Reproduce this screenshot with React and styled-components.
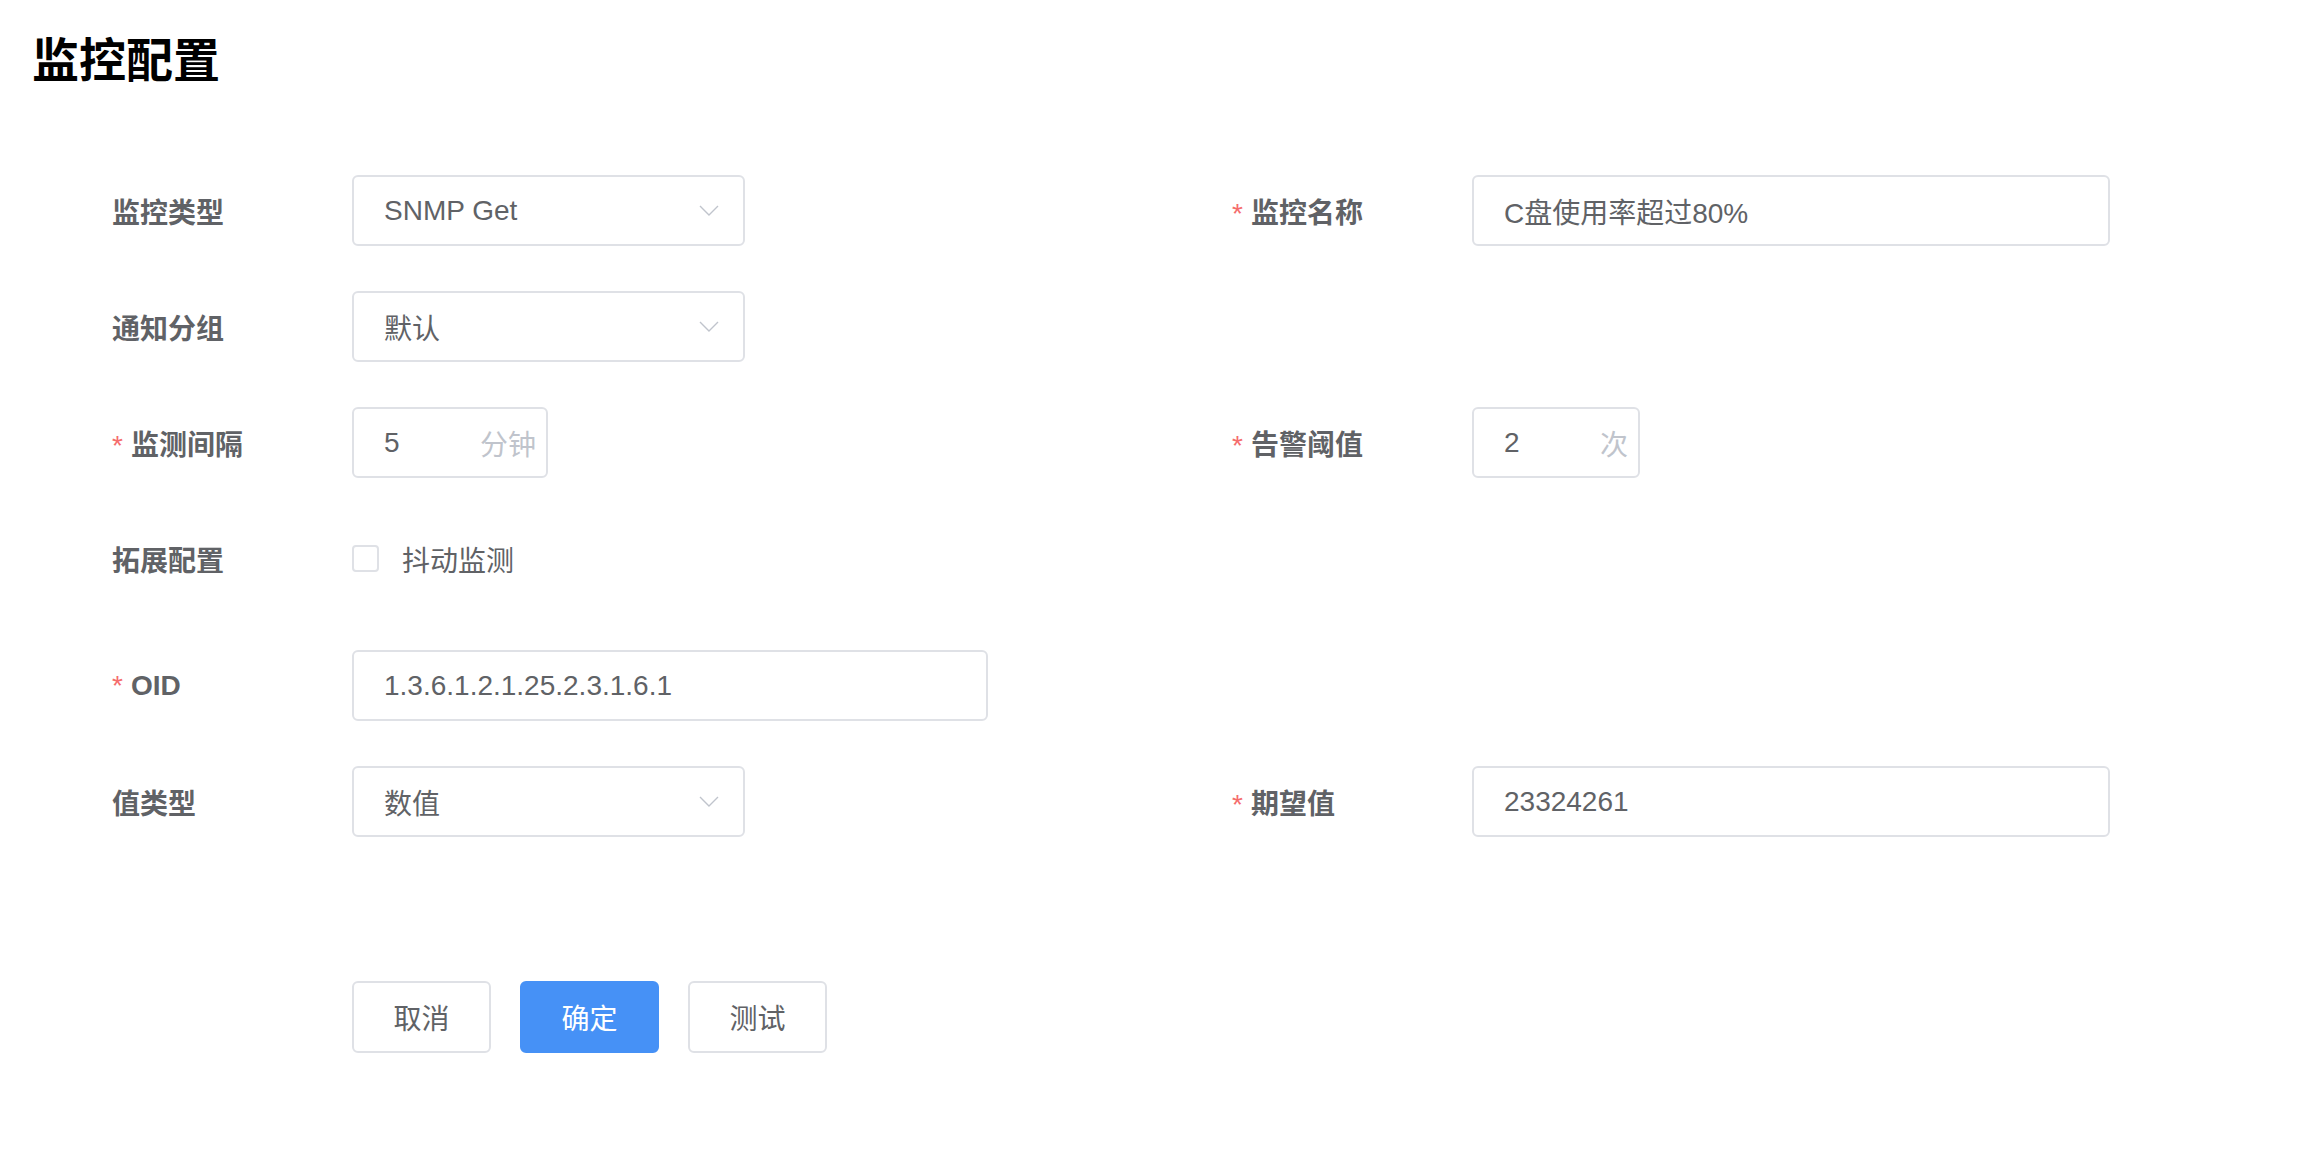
import React, { useState } from "react";
import styled, { createGlobalStyle } from "styled-components";

const GlobalStyle = createGlobalStyle`
  body {
    margin: 0;
    background: #fff;
    font-family: "Liberation Sans", "Noto Sans CJK SC", sans-serif;
  }
`;

const Page = styled.div`
  padding: 38px 32px 80px;
`;

const Title = styled.h1`
  margin: 0;
  font-size: 47px;
  line-height: 46px;
  font-weight: 700;
  color: #000;
`;

const Form = styled.form`
  display: flex;
  flex-direction: column;
  gap: 45px;
  margin-top: 91px;
  padding-left: 80px;
`;

const Row = styled.div`
  display: grid;
  grid-template-columns: 1120px 1120px;
  margin-bottom: ${(p) => (p.$extra ? "11px" : "0")};
`;

const Item = styled.div`
  display: flex;
  align-items: center;
  height: 71px;
`;

const Label = styled.label`
  width: 240px;
  flex-shrink: 0;
  font-size: 28px;
  font-weight: 700;
  color: #606266;

  &::before {
    content: ${(p) => (p.$required ? "'*'" : "none")};
    color: #f56c6c;
    margin-right: 8px;
    font-weight: 400;
  }
`;

const Box = styled.div`
  display: flex;
  align-items: center;
  box-sizing: border-box;
  width: ${(p) => p.$width}px;
  height: 71px;
  padding: 0 10px 0 30px;
  border: 2px solid #dfe1e6;
  border-radius: 6px;
  background: #fff;
`;

const Input = styled.input`
  flex: 1;
  min-width: 0;
  border: none;
  outline: none;
  padding: 0;
  background: transparent;
  font-family: inherit;
  font-size: 28px;
  color: #606266;
`;

const Suffix = styled.span`
  font-size: 28px;
  color: #c0c4cc;
`;

const Arrow = styled.svg`
  width: 20px;
  height: 11px;
  margin-right: 14px;
  flex-shrink: 0;
`;

const CheckWrap = styled.label`
  display: flex;
  align-items: center;
  gap: 23px;
  font-size: 28px;
  color: #606266;
  cursor: pointer;
`;

const CheckBox = styled.span`
  box-sizing: border-box;
  width: 27px;
  height: 27px;
  border: 2px solid #dfe1e6;
  border-radius: 4px;
  background: ${(p) => (p.$checked ? "#4691f6" : "#fff")};
`;

const Actions = styled.div`
  display: flex;
  gap: 29px;
  margin-top: 144px;
  padding-left: 320px;
`;

const Button = styled.button`
  box-sizing: border-box;
  width: 139px;
  height: 72px;
  border: 2px solid ${(p) => (p.$primary ? "#4691f6" : "#dfe1e6")};
  border-radius: 6px;
  background: ${(p) => (p.$primary ? "#4691f6" : "#fff")};
  color: ${(p) => (p.$primary ? "#fff" : "#606266")};
  font-family: inherit;
  font-size: 28px;
  cursor: pointer;
`;

const Select = ({ value, width = 393 }) => (
  <Box $width={width}>
    <Input value={value} readOnly />
    <Arrow viewBox="0 0 20 11">
      <polyline points="1,1 10,10 19,1" fill="none" stroke="#c0c4cc" strokeWidth="1.4" />
    </Arrow>
  </Box>
);

const TextField = ({ value, width = 638, suffix }) => (
  <Box $width={width}>
    <Input defaultValue={value} />
    {suffix && <Suffix>{suffix}</Suffix>}
  </Box>
);

const Field = ({ label, required, children }) => (
  <Item>
    <Label $required={required}>{label}</Label>
    {children}
  </Item>
);

const App = () => {
  const [jitter, setJitter] = useState(false);

  return (
    <Page>
      <GlobalStyle />
      <Title>监控配置</Title>
      <Form onSubmit={(e) => e.preventDefault()}>
        <Row>
          <Field label="监控类型">
            <Select value="SNMP Get" />
          </Field>
          <Field label="监控名称" required>
            <TextField value="C盘使用率超过80%" />
          </Field>
        </Row>
        <Row>
          <Field label="通知分组">
            <Select value="默认" />
          </Field>
        </Row>
        <Row>
          <Field label="监测间隔" required>
            <TextField value="5" width={196} suffix="分钟" />
          </Field>
          <Field label="告警阈值" required>
            <TextField value="2" width={168} suffix="次" />
          </Field>
        </Row>
        <Row $extra>
          <Field label="拓展配置">
            <CheckWrap onClick={() => setJitter(!jitter)}>
              <CheckBox $checked={jitter} />
              抖动监测
            </CheckWrap>
          </Field>
        </Row>
        <Row>
          <Field label="OID" required>
            <TextField value="1.3.6.1.2.1.25.2.3.1.6.1" width={636} />
          </Field>
        </Row>
        <Row>
          <Field label="值类型">
            <Select value="数值" />
          </Field>
          <Field label="期望值" required>
            <TextField value="23324261" />
          </Field>
        </Row>
      </Form>
      <Actions>
        <Button type="button">取消</Button>
        <Button type="button" $primary>确定</Button>
        <Button type="button">测试</Button>
      </Actions>
    </Page>
  );
};

export default App;
